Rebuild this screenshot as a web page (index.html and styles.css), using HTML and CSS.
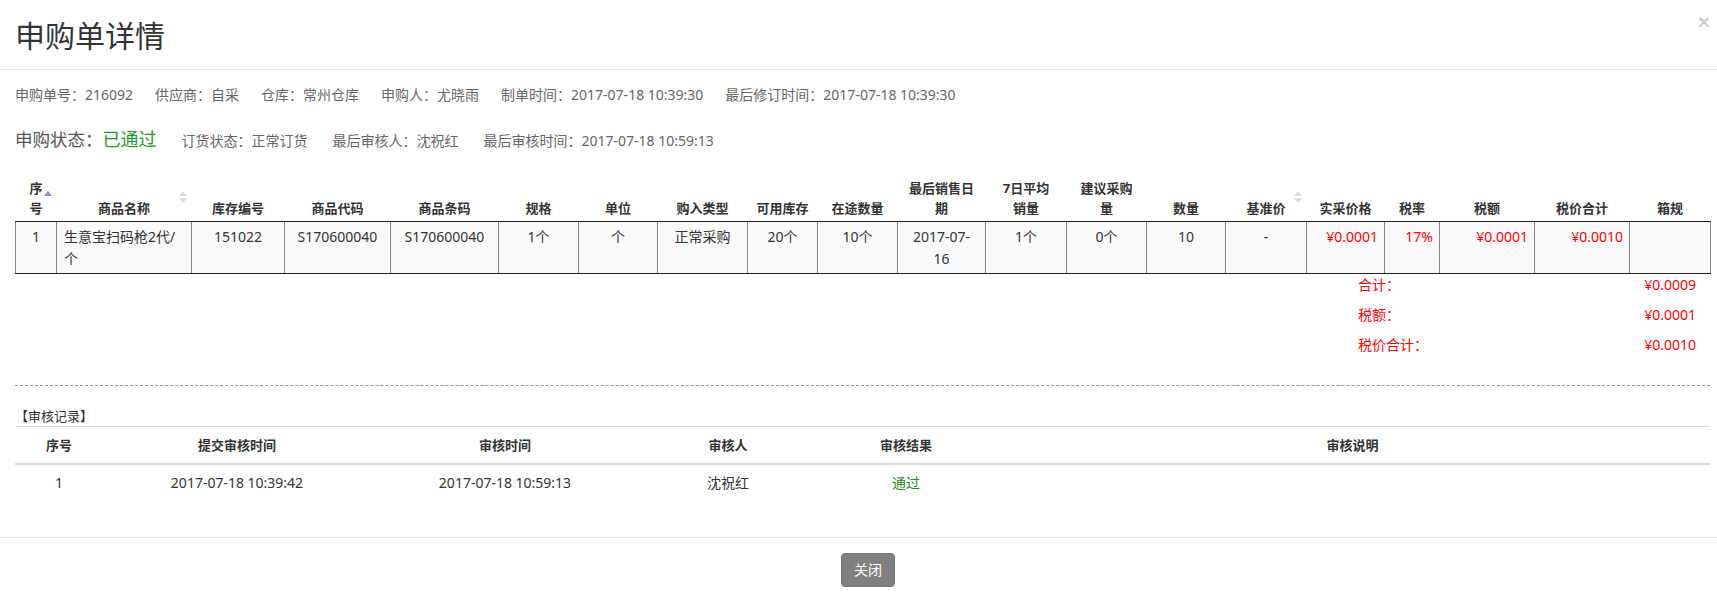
FILE: index.html
```html
<!DOCTYPE html>
<html lang="zh-CN">
<head>
<meta charset="utf-8">
<title>申购单详情</title>
<link rel="stylesheet" href="styles.css">
</head>
<body>
<div class="modal">
  <div class="modal-header">
    <h4 class="modal-title">申购单详情</h4>
    <button class="close" type="button">×</button>
  </div>
  <div class="modal-body">
    <div class="info-row">
      <span>申购单号：216092</span>
      <span>供应商：自采</span>
      <span>仓库：常州仓库</span>
      <span>申购人：尤晓雨</span>
      <span>制单时间：2017-07-18 10:39:30</span>
      <span>最后修订时间：2017-07-18 10:39:30</span>
    </div>
    <div class="info-row status-row">
      <span class="status-label">申购状态：<span class="status-ok">已通过</span></span>
      <span>订货状态：正常订货</span>
      <span>最后审核人：沈祝红</span>
      <span>最后审核时间：2017-07-18 10:59:13</span>
    </div>

    <table class="goods">
      <colgroup>
        <col><col><col><col><col><col><col><col><col><col>
        <col><col><col><col><col><col><col><col><col><col>
      </colgroup>
      <thead>
        <tr>
          <th>序<br>号<svg class="sort" viewBox="0 0 8 12"><path d="M0 5 4 0 8 5Z" fill="#7f8fdc"/></svg></th>
          <th>商品名称<svg class="sort" viewBox="0 0 8 12"><path d="M0 5 4 0 8 5Z" fill="#dcdcdc"/><path d="M0 7 8 7 4 12Z" fill="#dcdcdc"/></svg></th>
          <th>库存编号</th>
          <th>商品代码</th>
          <th>商品条码</th>
          <th>规格</th>
          <th>单位</th>
          <th>购入类型</th>
          <th>可用库存</th>
          <th>在途数量</th>
          <th>最后销售日<br>期</th>
          <th>7日平均<br>销量</th>
          <th>建议采购<br>量</th>
          <th>数量</th>
          <th>基准价<svg class="sort" viewBox="0 0 8 12"><path d="M0 5 4 0 8 5Z" fill="#dcdcdc"/><path d="M0 7 8 7 4 12Z" fill="#dcdcdc"/></svg></th>
          <th>实采价格</th>
          <th>税率</th>
          <th>税额</th>
          <th>税价合计</th>
          <th>箱规</th>
        </tr>
      </thead>
      <tbody>
        <tr>
          <td>1</td>
          <td class="left">生意宝扫码枪2代/个</td>
          <td>151022</td>
          <td>S170600040</td>
          <td>S170600040</td>
          <td>1个</td>
          <td>个</td>
          <td>正常采购</td>
          <td>20个</td>
          <td>10个</td>
          <td>2017-07-<br>16</td>
          <td>1个</td>
          <td>0个</td>
          <td>10</td>
          <td>-</td>
          <td class="money">¥0.0001</td>
          <td class="money">17%</td>
          <td class="money">¥0.0001</td>
          <td class="money">¥0.0010</td>
          <td></td>
        </tr>
      </tbody>
    </table>

    <div class="totals">
      <div class="total-row"><span>合计：</span><span>¥0.0009</span></div>
      <div class="total-row"><span>税额：</span><span>¥0.0001</span></div>
      <div class="total-row"><span>税价合计：</span><span>¥0.0010</span></div>
    </div>

    <hr class="divider">

    <div class="section-title">【审核记录】</div>
    <table class="audit">
      <colgroup><col><col><col><col><col><col></colgroup>
      <thead>
        <tr>
          <th>序号</th>
          <th>提交审核时间</th>
          <th>审核时间</th>
          <th>审核人</th>
          <th>审核结果</th>
          <th>审核说明</th>
        </tr>
      </thead>
      <tbody>
        <tr>
          <td>1</td>
          <td>2017-07-18 10:39:42</td>
          <td>2017-07-18 10:59:13</td>
          <td>沈祝红</td>
          <td><span class="pass">通过</span></td>
          <td></td>
        </tr>
      </tbody>
    </table>
  </div>
  <div class="modal-footer">
    <button class="btn" type="button">关闭</button>
  </div>
</div>
</body>
</html>
```

FILE: styles.css
```css
* { box-sizing: border-box; }
html, body { margin: 0; padding: 0; background: #fff; }
body {
  font-family: "Noto Sans", "Noto Sans CJK SC", sans-serif;
  font-size: 14px;
  color: #333;
  overflow: hidden;
}

.modal { width: 1725px; }

.modal-header {
  display: flex;
  justify-content: space-between;
  align-items: flex-start;
  padding: 15px 15px 12px;
  border-bottom: 1px solid #e5e5e5;
}
.modal-title {
  margin: 0;
  font-size: 30px;
  line-height: 42px;
  font-weight: 400;
  color: #333;
}
.close {
  margin-top: -4px;
  padding: 0;
  border: 0;
  background: none;
  font: 700 21px/1 "Liberation Sans", sans-serif;
  color: #000;
  opacity: .2;
}

.modal-body { padding: 15px 15px 15px; }

.info-row {
  display: flex;
  gap: 22px;
  line-height: 20px;
  color: #666;
  white-space: nowrap;
}
.status-row {
  margin-top: 22px;
  line-height: 24px;
  align-items: baseline;
  gap: 25px;
}
.status-label { font-size: 17.5px; color: #555; }
.status-ok { font-size: 18px; color: #1f9a1f; }

/* goods table */
.goods {
  margin-top: 17px;
  width: 100%;
  table-layout: fixed;
  border-collapse: collapse;
}
.goods col:nth-child(1) { width: 41px; }
.goods col:nth-child(2) { width: 135px; }
.goods col:nth-child(3) { width: 93px; }
.goods col:nth-child(4) { width: 106px; }
.goods col:nth-child(5) { width: 108px; }
.goods col:nth-child(6) { width: 80px; }
.goods col:nth-child(7) { width: 79px; }
.goods col:nth-child(8) { width: 90px; }
.goods col:nth-child(9) { width: 70px; }
.goods col:nth-child(10) { width: 80px; }
.goods col:nth-child(11) { width: 88px; }
.goods col:nth-child(12) { width: 81px; }
.goods col:nth-child(13) { width: 80px; }
.goods col:nth-child(14) { width: 79px; }
.goods col:nth-child(15) { width: 81px; }
.goods col:nth-child(16) { width: 78px; }
.goods col:nth-child(17) { width: 55px; }
.goods col:nth-child(18) { width: 95px; }
.goods col:nth-child(19) { width: 95px; }
.goods col:nth-child(20) { width: 81px; }

.goods th {
  position: relative;
  padding: 8px 8px 3px;
  font-size: 13px;
  font-weight: 700;
  line-height: 20px;
  vertical-align: bottom;
  text-align: center;
  color: #333;
  border-bottom: 1px solid #222;
}
.goods .sort {
  position: absolute;
  right: 5px;
  top: 21px;
  width: 8px;
  height: 12px;
  display: block;
}
.goods td {
  padding: 4px 7px 3px;
  line-height: 22px;
  vertical-align: top;
  text-align: center;
  color: #333;
  background: #f9f9f9;
  border: 1px solid #888;
  border-top-color: #222;
  border-bottom-color: #222;
}
.goods td.left { text-align: left; }
.goods td.money { text-align: right; color: #f00; padding-right: 6px; }

/* totals */
.totals {
  width: 338px;
  margin: 0 14px 0 auto;
  color: #f00;
  font-size: 14px;
}
.total-row {
  display: flex;
  justify-content: space-between;
  line-height: 22px;
  margin-bottom: 8px;
}

.divider {
  margin: 29px 0 0;
  height: 0;
  border: 0;
  border-top: 1px dashed #999;
}

.section-title {
  margin-top: 20px;
  font-size: 13px;
  line-height: 20px;
  color: #333;
  border-bottom: 1px solid #ddd;
}

/* audit table */
.audit {
  width: 100%;
  table-layout: fixed;
  border-collapse: collapse;
  margin-bottom: 21px;
}
.audit col:nth-child(1) { width: 88px; }
.audit col:nth-child(2) { width: 268px; }
.audit col:nth-child(3) { width: 268px; }
.audit col:nth-child(4) { width: 178px; }
.audit col:nth-child(5) { width: 178px; }
.audit col:nth-child(6) { width: 715px; }
.audit th {
  padding: 8px;
  line-height: 20px;
  font-size: 13px;
  font-weight: 700;
  text-align: center;
  color: #333;
  border-bottom: 2px solid #ddd;
}
.audit td {
  padding: 8px;
  line-height: 20px;
  text-align: center;
  color: #333;
}
.pass { color: #1a8f1a; }

.modal-footer {
  padding: 15px;
  text-align: center;
  border-top: 1px solid #e5e5e5;
}
.btn {
  display: inline-block;
  margin-left: 11px;
  padding: 6px 12px;
  font-family: inherit;
  font-size: 14px;
  line-height: 20px;
  color: #fff;
  background: #808080;
  border: 1px solid #787878;
  border-radius: 4px;
}
```
